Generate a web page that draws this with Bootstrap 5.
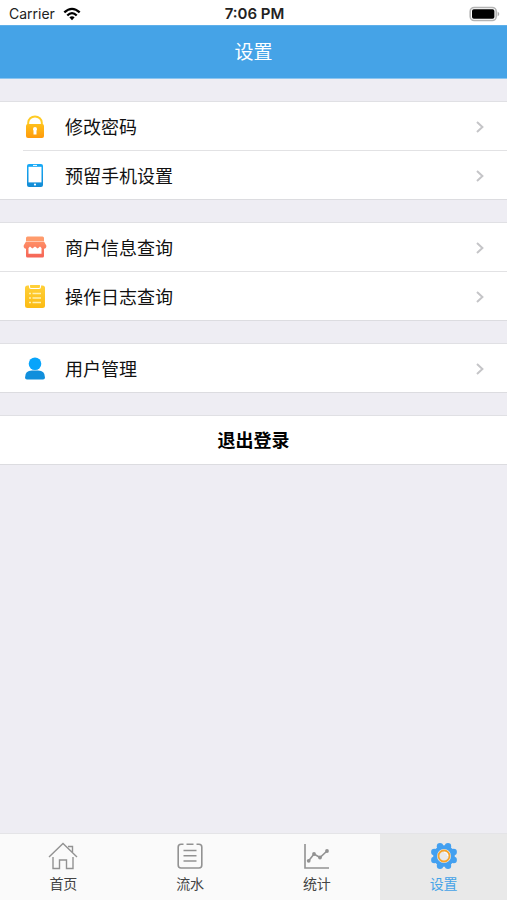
<!DOCTYPE html>
<html lang="zh-CN">
<head>
<meta charset="utf-8">
<meta name="viewport" content="width=device-width, initial-scale=1">
<title>设置</title>
<link rel="stylesheet" href="https://cdn.jsdelivr.net/npm/bootstrap@5.3.0/dist/css/bootstrap.min.css">
<style>
body{background:#eeedf3;color:#111;font-family:"Liberation Sans","Noto Sans CJK SC",sans-serif}
.status-bar{height:25px;padding:2px 7px 0 9px;font-family:Inter,"Liberation Sans",sans-serif;font-size:14px;line-height:20px;color:#222}
.status-time{font-size:15px}
.title-bar{height:54px;padding-top:2px;background:#45a3e7;border-top:1px solid #5fb0ea;border-bottom:1px solid #8cc5f0}
.title-text{font-size:19px;line-height:24px}
.settings-main{padding-top:22px}
.settings-list{gap:22px}
.settings-group{border-top:1px solid #e0e0e4;border-bottom:1px solid #dcdce0}
.settings-row{height:48px;padding:2px 21px 0 23px;font-size:18px;line-height:24px;color:#111}
.row-label{padding-top:2px}
.row-icon{width:24px;height:26px;margin-right:18px}
.thin-rule{height:1px;background:#e2e2e4}
.inset-rule{margin-left:23px}
.exit-button{height:48px;font-size:18px;line-height:24px;color:#000}
.exit-button.btn{padding:2px 0 0}
.tab-strip{height:67px;background:#fafafa;border-top:1px solid #e4e4e7}
.tab-link{padding-top:7px;font-size:14px;line-height:20px;color:#444}
.tab-link svg{margin-bottom:3px}
.tab-current{background:#e9e9e9;color:#45a3e7}
</style>
<script src="https://cdn.jsdelivr.net/npm/bootstrap@5.3.0/dist/js/bootstrap.bundle.min.js"></script>
</head>
<body>
<div class="d-flex flex-column min-vh-100">
  <div class="status-bar row g-0 bg-white align-items-center">
    <div class="col d-flex align-items-center gap-2">
      <span>Carrier</span>
      <svg width="18" height="14" viewBox="0 0 20 16" fill="none" stroke="#000" stroke-width="2.6" aria-hidden="true"><path d="M1.2 6.200Q10 -1.800 18.800 6.200M4.600 9.800Q10 4.300 15.400 9.800"/><path d="M7 11.800Q10 9.200 13 11.800L10 15Z" fill="#000" stroke="none"/></svg>
    </div>
    <div class="status-time col-auto fw-semibold">7:06 PM</div>
    <div class="col d-flex justify-content-end">
      <svg width="31" height="16" viewBox="0 0 31 16" aria-hidden="true"><rect x="1.2" y="1.5" width="26" height="13" rx="4" fill="#fff" stroke="#b4b4b4" stroke-width="1.6"/><rect x="3" y="3.2" width="22.4" height="9.6" rx="1.8"/><path d="M28.6 5.4Q32 8 28.6 10.6Z" fill="#aaa"/></svg>
    </div>
  </div>
  <header class="title-bar d-flex align-items-center justify-content-center text-white"><h1 class="title-text m-0 fw-normal">设置</h1></header>

  <main class="settings-main flex-grow-1 d-flex flex-column">
    <div class="settings-list d-grid">
      <div class="settings-group bg-white">
        <a href="#password" class="settings-row d-flex align-items-center text-decoration-none">
          <svg class="row-icon" viewBox="0 0 24 26" aria-hidden="true"><defs><linearGradient id="gold" x2="0" y2="1"><stop stop-color="#ffc01b"/><stop offset="1" stop-color="#ff9a0a"/></linearGradient></defs><path d="M5.200 12V8.800a6.800 6.300 0 0 1 13.600 0V12" fill="none" stroke="#ffcb24" stroke-width="2"/><rect x="3" y="10" width="18" height="14" rx="2" fill="url(#gold)"/><path d="M12 13a2 2 0 0 1 2 2q0 1-.5 1.600V20.500h-3v-3.900Q10 16 10 15a2 2 0 0 1 2-2" fill="#fff"/></svg>
          <span class="row-label flex-grow-1">修改密码</span>
          <svg width="12" height="14" viewBox="0 0 12 14" fill="none" stroke="#c5c5c8" stroke-width="2" aria-hidden="true"><path d="M3 2l5.400 5L3 12"/></svg>
        </a>
        <div class="thin-rule inset-rule"></div>
        <a href="#phone" class="settings-row d-flex align-items-center text-decoration-none">
          <svg class="row-icon" viewBox="0 0 24 26" aria-hidden="true"><defs><linearGradient id="phoneblue" x2="0" y2="1"><stop stop-color="#16aaf8"/><stop offset="1" stop-color="#138bd4"/></linearGradient></defs><rect x="4" y="1" width="16" height="23" rx="2" fill="url(#phoneblue)"/><path d="M5.500 3.800h13v15.600h-13z" fill="#fff"/><path d="M10 2.400h4" stroke="#fff"/><circle cx="12" cy="21.600" r="1.100" fill="#fff"/></svg>
          <span class="row-label flex-grow-1">预留手机设置</span>
          <svg width="12" height="14" viewBox="0 0 12 14" fill="none" stroke="#c5c5c8" stroke-width="2" aria-hidden="true"><path d="M3 2l5.400 5L3 12"/></svg>
        </a>
      </div>

      <div class="settings-group bg-white">
        <a href="#merchant" class="settings-row d-flex align-items-center text-decoration-none">
          <svg class="row-icon" viewBox="0 0 24 26" aria-hidden="true"><defs><linearGradient id="coral" x2="0" y2="1"><stop stop-color="#ff9066"/><stop offset="1" stop-color="#f56457"/></linearGradient></defs><path d="M4.500 1.500h15q1.500 0 1.500 1.500v3H3V3q0-1.500 1.500-1.500z" fill="#ff9b6c"/><path d="M3 6.400h18l2.300 4v1.500q-.8 2-2.300 1.700V21q0 1.500-1.500 1.500h-15Q3 22.500 3 21v-7.400Q1.500 13.900.700 11.900v-1.500z" fill="url(#coral)"/><path d="M5.500 13l1.500-1.600 2.300 2L12 11.500l2.700 1.900 2.300-2 1.500 1.600v5.800h-13z" fill="#fff"/></svg>
          <span class="row-label flex-grow-1">商户信息查询</span>
          <svg width="12" height="14" viewBox="0 0 12 14" fill="none" stroke="#c5c5c8" stroke-width="2" aria-hidden="true"><path d="M3 2l5.400 5L3 12"/></svg>
        </a>
        <div class="thin-rule"></div>
        <a href="#logs" class="settings-row d-flex align-items-center text-decoration-none">
          <svg class="row-icon" viewBox="0 0 24 26" aria-hidden="true"><defs><linearGradient id="yellow" x2="0" y2="1"><stop stop-color="#ffd039"/><stop offset="1" stop-color="#fcbb13"/></linearGradient></defs><rect x="2" y="1.500" width="20" height="22.500" rx="2.500" fill="url(#yellow)"/><path d="M6.500 1v2q0 1.500 1.500 1.500h8q1.500 0 1.500-1.500V1" fill="#ffd039" stroke="#fff" stroke-width="1.100"/><path d="M6 9.500h2m1.500 0H18M6 14h2m1.500 0H18M6 18.500h2m1.500 0H18" stroke="#fff0b0" stroke-width="1.400"/></svg>
          <span class="row-label flex-grow-1">操作日志查询</span>
          <svg width="12" height="14" viewBox="0 0 12 14" fill="none" stroke="#c5c5c8" stroke-width="2" aria-hidden="true"><path d="M3 2l5.400 5L3 12"/></svg>
        </a>
      </div>

      <div class="settings-group bg-white">
        <a href="#users" class="settings-row d-flex align-items-center text-decoration-none">
          <svg class="row-icon" viewBox="0 0 24 26" aria-hidden="true"><path d="M2 21.500q0-7 7-7h6q7 0 7 7 0 2-2 2H4q-2 0-2-2" fill="#118fdc"/><circle cx="12" cy="7.800" r="6.300" fill="#07a4fb"/></svg>
          <span class="row-label flex-grow-1">用户管理</span>
          <svg width="12" height="14" viewBox="0 0 12 14" fill="none" stroke="#c5c5c8" stroke-width="2" aria-hidden="true"><path d="M3 2l5.400 5L3 12"/></svg>
        </a>
      </div>

      <div class="settings-group bg-white">
        <button type="button" class="exit-button btn w-100 border-0 rounded-0 fw-bold">退出登录</button>
      </div>
    </div>
  </main>

  <nav class="tab-strip row g-0 text-center sticky-bottom" aria-label="主导航">
    <a href="#home" class="tab-link col d-flex flex-column align-items-center text-decoration-none">
      <svg width="30" height="30" viewBox="0 0 30 30" fill="none" stroke="#929292" stroke-width="1.400" aria-hidden="true"><path d="M1 16L15 2.500 29 16M20 5.500h4.500V11M5 16v11.500h6.500v-8.500h7v8.500H25V16"/></svg>
      <span>首页</span>
    </a>
    <a href="#flow" class="tab-link col d-flex flex-column align-items-center text-decoration-none">
      <svg width="30" height="30" viewBox="0 0 30 30" fill="none" stroke="#929292" stroke-width="1.600" aria-hidden="true"><path d="M7 3.200H6Q3.200 3.200 3.200 6v18Q3.200 27 6 27h18q2.800 0 2.800-3V6q0-2.800-2.800-2.800h-1M11.500 3.200h7M6 3.200h2.500M21.500 3.200H24M8.500 9.500h13M8.500 14.700h13M8.500 20h13"/></svg>
      <span>流水</span>
    </a>
    <a href="#stats" class="tab-link col d-flex flex-column align-items-center text-decoration-none">
      <svg width="30" height="30" viewBox="0 0 30 30" fill="none" stroke="#929292" stroke-width="1.600" aria-hidden="true"><path d="M3 3v24h24M6.500 20l5.500-7 6 3.500 7-6.500"/><g fill="#929292" stroke="none"><circle cx="6.700" cy="19.800" r="1.900"/><circle cx="12" cy="13" r="1.900"/><circle cx="18" cy="16.500" r="1.900"/><circle cx="25" cy="10" r="1.900"/></g></svg>
      <span>统计</span>
    </a>
    <a href="#settings" class="tab-link tab-current col d-flex flex-column align-items-center text-decoration-none" aria-current="page">
      <svg width="30" height="30" viewBox="0 0 30 30" aria-hidden="true"><g fill="#43a0f0"><circle cx="15" cy="15" r="10.800"/><circle cx="19" cy="5.300" r="3.200"/><circle cx="24.700" cy="11" r="3.200"/><circle cx="24.700" cy="19" r="3.200"/><circle cx="19" cy="24.700" r="3.200"/><circle cx="11" cy="24.700" r="3.200"/><circle cx="5.300" cy="19" r="3.200"/><circle cx="5.300" cy="11" r="3.200"/><circle cx="11" cy="5.300" r="3.200"/></g><circle cx="15" cy="15" r="7" fill="#e8e9ec"/><circle cx="15" cy="15" r="5.500" fill="none" stroke="#f5a42c" stroke-width="1.800"/><path d="M15 11.200A3.800 3.800 0 0 1 18.800 15" fill="none" stroke="#fff"/></svg>
      <span>设置</span>
    </a>
  </nav>
</div>
</body>
</html>
